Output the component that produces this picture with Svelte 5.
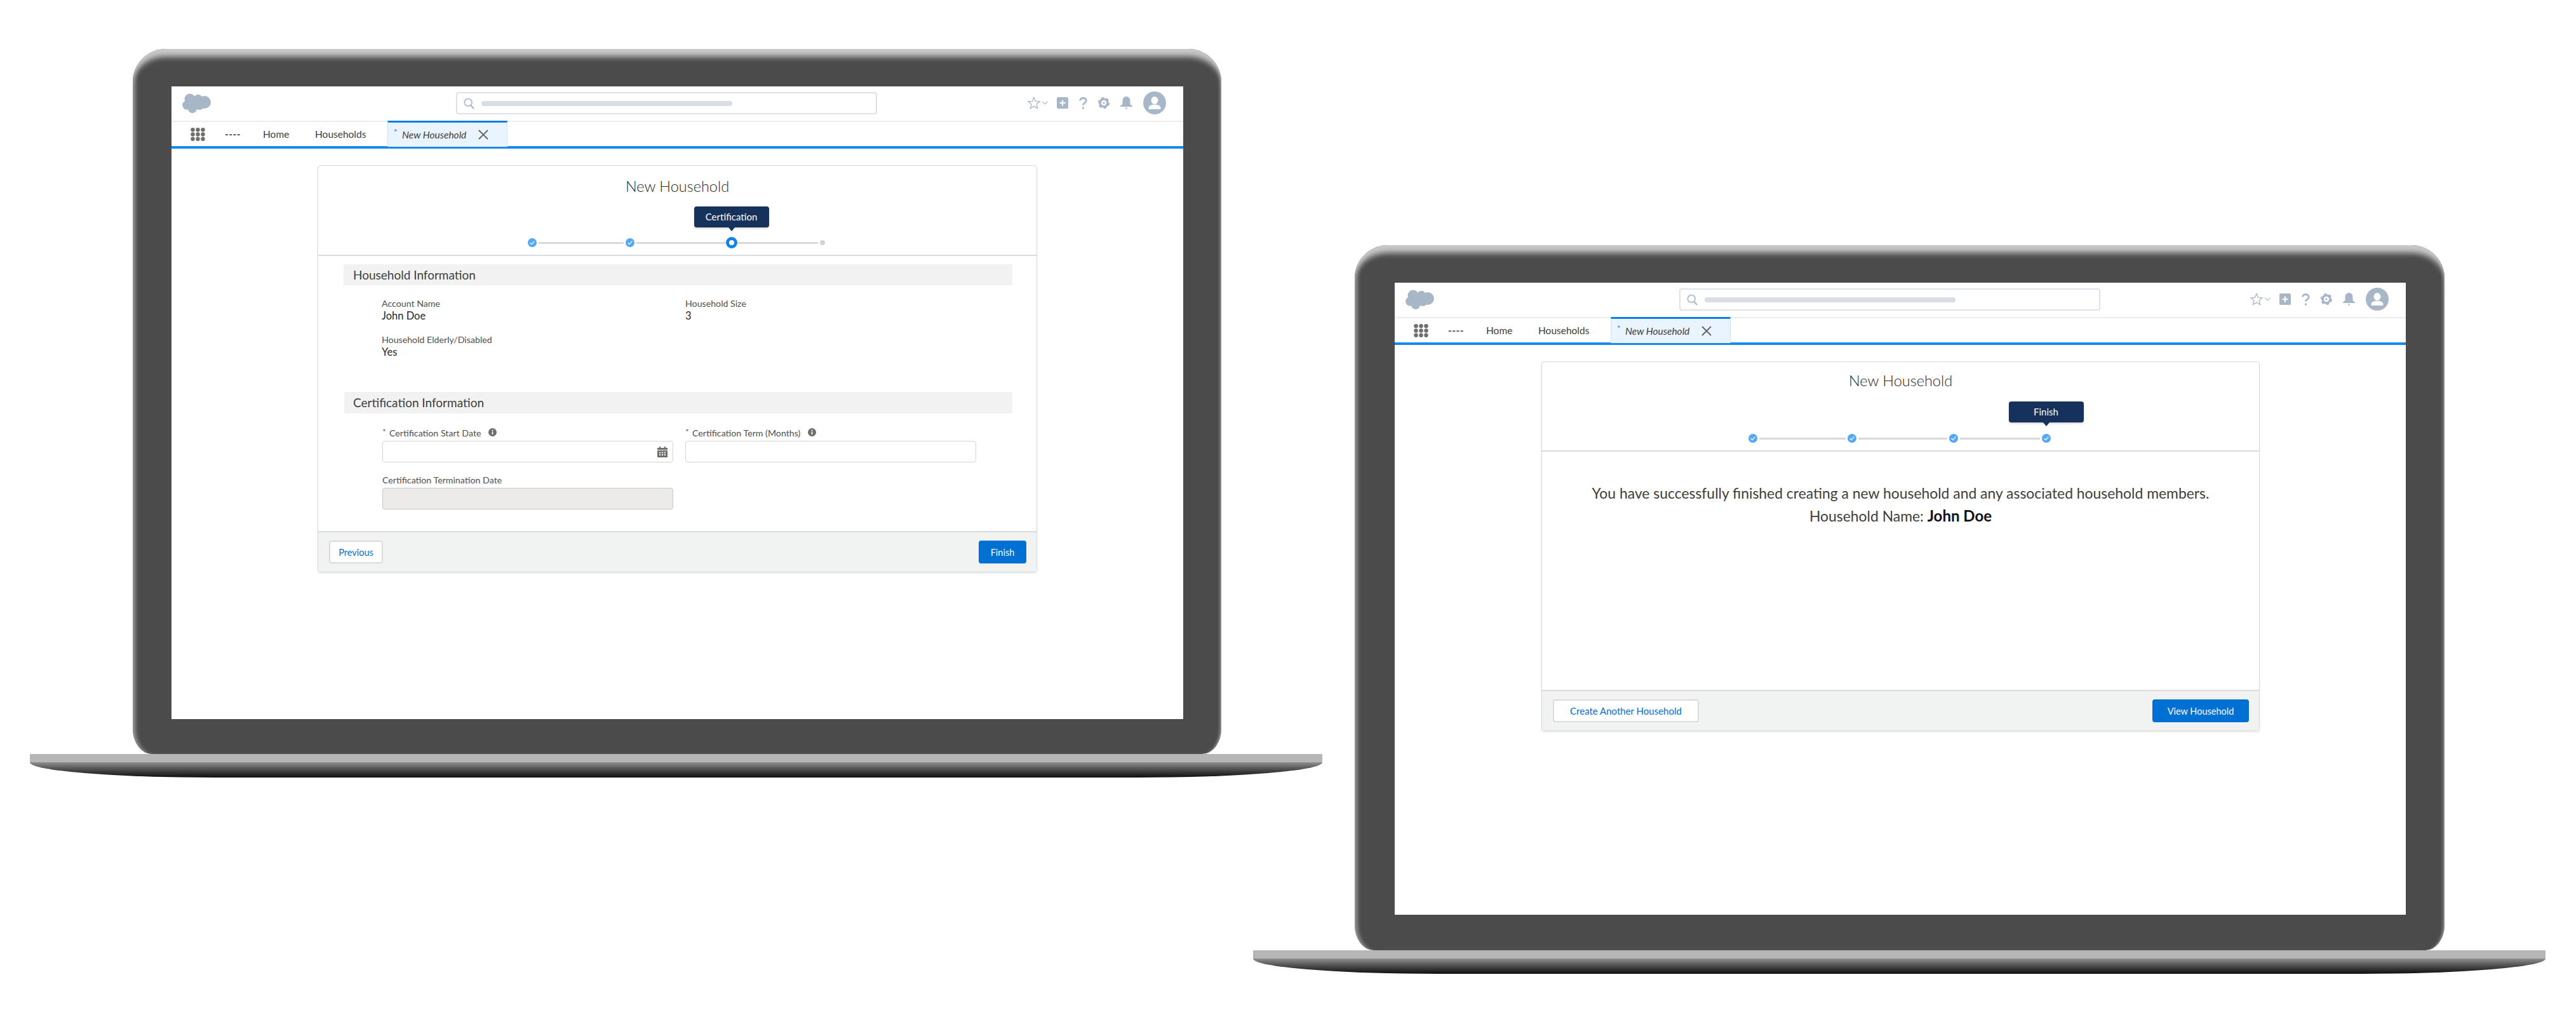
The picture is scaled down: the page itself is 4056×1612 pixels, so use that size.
<script>
  const certSteps = [
    { state: 'done', line: 134 },
    { state: 'done', line: 140 },
    { state: 'current', line: 126, tip: 'Certification' },
    { state: 'todo' }
  ];
  const finishSteps = [
    { state: 'done', line: 136 },
    { state: 'done', line: 140 },
    { state: 'done', line: 126 },
    { state: 'done', tip: 'Finish' }
  ];
</script>

{#snippet info()}
  <svg class="info" viewBox="0 0 12 12" width="13" height="13">
    <circle cx="6" cy="6" r="6" fill="#706e6b" />
    <rect x="5.2" y="5.2" width="1.6" height="4" fill="#fff" />
    <circle cx="6" cy="3.4" r="1" fill="#fff" />
  </svg>
{/snippet}

{#snippet chrome()}
  <header class="topbar">
    <svg class="logo" viewBox="0 0 45 31" width="45" height="31" fill="#a8b7c7">
      <circle cx="12" cy="9" r="8.5" />
      <circle cx="25" cy="8.5" r="6.7" />
      <circle cx="35" cy="14" r="10" />
      <circle cx="7.5" cy="18.5" r="7.3" />
      <circle cx="16" cy="24" r="7" />
      <circle cx="27" cy="18" r="8" />
      <circle cx="20" cy="15" r="10" />
    </svg>
    <div class="search">
      <svg viewBox="0 0 20 20" width="18" height="20" fill="none" stroke="#a8b7c7" stroke-width="1.8">
        <circle cx="8" cy="8" r="6.5" />
        <path d="M12.5 13 18 19" stroke-width="2.4" />
      </svg>
      <span class="placeholder"></span>
    </div>
    <div class="tools">
      <span class="fav">
        <svg viewBox="0 0 20 20" width="20" height="20" fill="none" stroke="#a8b7c7" stroke-width="1.3">
          <path d="M10 1.2 12.6 7.4 19 7.9 14.1 12.1 15.7 18.6 10 15.1 4.3 18.6 5.9 12.1 1 7.9 7.4 7.4Z" />
        </svg>
        <svg viewBox="0 0 9 6" width="9" height="6" fill="none" stroke="#a8b7c7" stroke-width="1.2">
          <path d="M.5.8 4.5 5 8.5.8" />
        </svg>
      </span>
      <svg viewBox="0 0 18 18" width="18" height="18">
        <rect width="18" height="18" rx="2" fill="#a8b7c7" />
        <path d="M9 4.5v9M4.5 9h9" stroke="#fff" stroke-width="2.2" />
      </svg>
      <svg viewBox="0 0 13 19" width="13" height="19" fill="none" stroke="#a8b7c7" stroke-width="2.8">
        <path d="M1.6 5.6C1.6 3 3.6 1.5 6.4 1.5s4.9 1.6 4.9 4c0 3.6-4.8 3.4-4.8 7.2" />
        <circle cx="6.5" cy="17" r="1.7" fill="#a8b7c7" stroke="none" />
      </svg>
      <svg viewBox="0 0 18 18" width="18" height="18">
        <circle cx="9" cy="9" r="6" fill="none" stroke="#a8b7c7" stroke-width="3.6" />
        <circle cx="9" cy="9" r="8" fill="none" stroke="#a8b7c7" stroke-width="2.4" stroke-dasharray="4.2 4.18" />
        <circle cx="9" cy="9" r="1.6" fill="#a8b7c7" />
      </svg>
      <svg viewBox="0 0 19 20" width="19" height="20" fill="#a8b7c7">
        <path d="M9.5 0C13 0 15.5 2.6 15.5 6.2V11c0 1.6 1.2 2.4 3.5 3.6V16H0v-1.4C2.3 13.4 3.5 12.6 3.5 11V6.2C3.5 2.6 6 0 9.5 0Z" />
        <path d="M7.2 17.5h4.6L9.5 20Z" />
      </svg>
      <svg viewBox="0 0 36 36" width="36" height="36">
        <circle cx="18" cy="18" r="18" fill="#a8b7c7" />
        <ellipse cx="18" cy="14" rx="5.5" ry="6" fill="#fff" />
        <path d="M8.5 26.5C8.5 22.5 12 20.8 18 20.8S27.5 22.5 27.5 26.5C27.5 27.5 26.8 28 26 28H10C9.2 28 8.5 27.5 8.5 26.5Z" fill="#fff" />
      </svg>
    </div>
  </header>
  <nav class="navbar">
    <svg class="launcher" viewBox="0 0 23 21" width="23" height="21" fill="#706e6b">
      {#each [3.3, 10.5, 17.7] as y}
        {#each [3.5, 11.5, 19.5] as x}
          <circle cx={x} cy={y} r="3.2" />
        {/each}
      {/each}
    </svg>
    <b class="app">----</b>
    <span class="home">Home</span>
    <span class="households">Households</span>
    <div class="tab">
      <span class="star">*</span>
      <em>New Household</em>
      <svg viewBox="0 0 16 16" width="16" height="16" stroke="#5f5f5c" stroke-width="1.8">
        <path d="M1 1 15 15M15 1 1 15" />
      </svg>
    </div>
  </nav>
{/snippet}

{#snippet stepper(steps)}
  <div class="stepper">
    {#each steps as step}
      <span class="step {step.state}">
        {#if step.tip}
          <span class="tip">{step.tip}</span>
        {/if}
        {#if step.state === 'done'}
          <svg viewBox="0 0 14 14" width="14" height="14">
            <circle cx="7" cy="7" r="7" fill="#54a8f5" />
            <path d="M3.6 7.2 6 9.6 10.4 4.6" fill="none" stroke="#fff" stroke-width="1.3" />
          </svg>
        {/if}
      </span>
      {#if step.line}
        <span class="line" style="width: {step.line}px"></span>
      {/if}
    {/each}
  </div>
{/snippet}

<div class="page">
  <section class="laptop first">
    <div class="bezel">
      <div class="screen">
        {@render chrome()}
        <main>
          <div class="card">
            <div class="card-head">
              <h1>New Household</h1>
              {@render stepper(certSteps)}
            </div>
            <div class="card-body form">
              <h2>Household Information</h2>
              <div class="fields">
                <div class="field">
                  <span class="label">Account Name</span>
                  <span class="value">John Doe</span>
                </div>
                <div class="field">
                  <span class="label">Household Size</span>
                  <span class="value">3</span>
                </div>
                <div class="field">
                  <span class="label">Household Elderly/Disabled</span>
                  <span class="value">Yes</span>
                </div>
              </div>
              <h2 class="next">Certification Information</h2>
              <div class="inputs">
                <div class="field">
                  <span class="label"><i>*</i>Certification Start Date {@render info()}</span>
                  <div class="input date">
                    <svg viewBox="0 0 16 18" width="16" height="18">
                      <path d="M0 3h3V1h2v2h6V1h2v2h3v3H0ZM0 7h16v11H0Z" fill="#706e6b" />
                      <path d="M3 9.5h2.2v2H3ZM6.9 9.5h2.2v2H6.9ZM10.8 9.5H13v2h-2.2ZM3 13h2.2v2H3ZM6.9 13h2.2v2H6.9ZM10.8 13H13v2h-2.2Z" fill="#fff" />
                    </svg>
                  </div>
                </div>
                <div class="field">
                  <span class="label"><i>*</i>Certification Term (Months) {@render info()}</span>
                  <div class="input"></div>
                </div>
                <div class="field">
                  <span class="label">Certification Termination Date</span>
                  <div class="input disabled"></div>
                </div>
              </div>
            </div>
            <div class="card-foot">
              <button class="neutral prev">Previous</button>
              <button class="brand finish">Finish</button>
            </div>
          </div>
        </main>
      </div>
    </div>
    <div class="base"></div>
  </section>

  <section class="laptop second">
    <div class="bezel">
      <div class="screen">
        {@render chrome()}
        <main>
          <div class="card">
            <div class="card-head">
              <h1>New Household</h1>
              {@render stepper(finishSteps)}
            </div>
            <div class="card-body done-msg">
              <p>You have successfully finished creating a new household and any associated household members.</p>
              <p>Household Name: <strong>John Doe</strong></p>
            </div>
            <div class="card-foot">
              <button class="neutral create">Create Another Household</button>
              <button class="brand view">View Household</button>
            </div>
          </div>
        </main>
      </div>
    </div>
    <div class="base"></div>
  </section>
</div>

<style>
  :global(body) {
    margin: 0;
    background: #fff;
  }

  .page {
    position: relative;
    width: 4056px;
    height: 1612px;
    background: #fff;
    overflow: hidden;
    font-family: Lato, "Open Sans", sans-serif;
    color: #3e3e3c;
  }

  .laptop {
    position: absolute;
    display: flex;
    flex-direction: column;
    align-items: center;
    width: 2035px;
  }

  .laptop.first {
    left: 47px;
    top: 77px;
  }

  .laptop.second {
    left: 1973px;
    top: 386px;
  }

  .bezel {
    box-sizing: border-box;
    width: 1714px;
    height: 1110px;
    margin-left: 3px;
    padding: 59px 60px 55px 61px;
    background: #4b4b4b;
    border-radius: 52px 52px 30px 30px / 52px 52px 40px 40px;
    box-shadow:
      inset 0 20px 10px -8px #c9c9c9,
      inset 9px 0 6px -5px #9c9c9c,
      inset -5px 0 4px -3px #9c9c9c;
  }

  .second .bezel {
    width: 1716px;
    margin-left: 1px;
    padding: 59px 61px 56px 63px;
  }

  .screen {
    display: flex;
    flex-direction: column;
    height: 100%;
    background: #fff;
  }

  .base {
    width: 2035px;
    height: 37px;
    flex: none;
    background: linear-gradient(#b6b6b6 0 13px, #8e8e8e 13px, #4a4a4a 25px, #0e0e0e 37px);
    border-radius: 0 0 293px 293px / 0 0 24px 24px;
  }

  .topbar {
    flex: none;
    box-sizing: border-box;
    display: grid;
    grid-template-columns: 431px 663px 1fr;
    align-items: center;
    height: 56px;
    padding: 0 27px 2px 17px;
    border-bottom: 2px solid #ececec;
  }

  .logo {
    display: block;
  }

  .search {
    box-sizing: border-box;
    display: flex;
    align-items: center;
    gap: 10px;
    height: 35px;
    margin-top: 1px;
    padding-left: 10px;
    border: 2px solid #dde1ea;
    border-radius: 4px;
  }

  .placeholder {
    width: 395px;
    height: 8px;
    border-radius: 4px;
    background: #d8dde6;
  }

  .tools {
    display: flex;
    justify-content: flex-end;
    align-items: center;
    gap: 17px;
  }

  .fav {
    display: flex;
    align-items: center;
    gap: 3px;
    margin-right: -3px;
  }

  .navbar {
    flex: none;
    box-sizing: border-box;
    display: flex;
    align-items: center;
    height: 42px;
    padding-left: 30px;
    border-bottom: 4px solid #1589ee;
    font-size: 15.5px;
  }

  .launcher {
    margin-right: 31px;
  }

  .app {
    width: 60px;
    font-weight: 700;
    letter-spacing: 0.5px;
  }

  .home {
    width: 82px;
  }

  .households {
    width: 114px;
  }

  .tab {
    box-sizing: border-box;
    display: flex;
    align-items: center;
    width: 189px;
    height: 41px;
    margin-top: -1px;
    padding-left: 9px;
    background: #e9f4fe;
    border-top: 3px solid #0d7fe0;
    border-left: 1px solid #cfe4f7;
    border-right: 1px solid #cfe4f7;
  }

  .star {
    width: 13px;
    margin-top: -8px;
    color: #1589ee;
    font-size: 13px;
  }

  .tab em {
    width: 120px;
  }

  main {
    flex: 1;
    padding: 26px 230px 0 230px;
  }

  .second main {
    padding: 26px 230px 0 231px;
  }

  .card {
    border: 1px solid #d8d8d8;
    border-radius: 4px;
    box-shadow: 0 2px 3px rgba(0, 0, 0, 0.08);
  }

  .card-head {
    box-sizing: border-box;
    display: flex;
    flex-direction: column;
    align-items: center;
    height: 142px;
    border-bottom: 2px solid #dcdcdc;
  }

  h1 {
    margin: 15px 0 0;
    height: 34px;
    font-size: 23.5px;
    line-height: 34px;
    font-weight: 300;
    color: #2b2826;
  }

  .stepper {
    display: flex;
    align-items: center;
    flex: none;
    height: 18px;
    margin-top: 63px;
    margin-left: -4px;
  }

  .second .stepper {
    margin-top: 65px;
  }

  .step {
    position: relative;
    display: flex;
  }

  .line {
    height: 3px;
    margin: 0 3px;
    background: #d9d9d9;
  }

  .step.current {
    box-sizing: border-box;
    width: 18px;
    height: 18px;
    margin: 0 -2px;
    border: 5px solid #0f84e8;
    border-radius: 50%;
  }

  .step.todo {
    width: 8px;
    height: 8px;
    border-radius: 50%;
    background: #d4d4d4;
  }

  .tip {
    position: absolute;
    left: 50%;
    bottom: 100%;
    transform: translateX(-50%);
    margin-bottom: 18px;
    width: 118px;
    height: 33px;
    border-radius: 4px;
    background: #16325c;
    color: #fff;
    font-size: 15px;
    line-height: 33px;
    text-align: center;
    box-shadow: 0 2px 3px rgba(0, 0, 0, 0.16);
  }

  .step.current .tip {
    margin-bottom: 20px;
  }

  .tip::after {
    content: "";
    position: absolute;
    left: 50%;
    top: 100%;
    margin-left: -5px;
    border: 5px solid transparent;
    border-bottom-width: 0;
    border-top: 6px solid #16325c;
  }

  .card-body {
    box-sizing: border-box;
  }

  .form {
    height: 433px;
    padding: 13px 38px 0 41px;
  }

  h2 {
    margin: 0;
    height: 33px;
    padding-left: 14px;
    background: #f2f2f2;
    font-size: 19px;
    line-height: 33px;
    font-weight: 400;
  }

  h2:first-child {
    margin-left: -1px;
    padding-left: 15px;
  }

  h2.next {
    height: 34px;
    margin-top: 52px;
    line-height: 34px;
  }

  .fields {
    display: grid;
    grid-template-columns: 478px 1fr;
    row-gap: 16px;
    padding: 18px 0 0 59px;
  }

  .inputs {
    display: grid;
    grid-template-columns: 458px 458px;
    gap: 17px 19px;
    padding: 20px 0 0 60px;
  }

  .field {
    display: flex;
    flex-direction: column;
  }

  .label {
    display: flex;
    align-items: center;
    height: 20px;
    font-size: 14.2px;
    color: #514f4d;
    white-space: pre;
  }

  .label i {
    width: 11px;
    color: #706e6b;
    font-style: normal;
    margin-top: -3px;
  }

  .info {
    margin-left: 8px;
    margin-top: -2px;
  }

  .value {
    height: 21px;
    font-size: 16.5px;
    line-height: 21px;
    color: #2b2826;
  }

  .input {
    box-sizing: border-box;
    display: flex;
    justify-content: flex-end;
    align-items: center;
    height: 34px;
    margin-top: 3px;
    padding-right: 8px;
    border: 1px solid #d4d4d4;
    border-radius: 4px;
    background: #fff;
  }

  .input.disabled {
    background: #ecebea;
    border-color: #c9c7c5;
  }

  .card-foot {
    box-sizing: border-box;
    display: flex;
    justify-content: space-between;
    align-items: center;
    height: 64px;
    padding: 0 16px 0 17px;
    background: #f1f2f2;
    border-top: 2px solid #dcdcdc;
    border-radius: 0 0 4px 4px;
  }

  button {
    box-sizing: border-box;
    height: 36px;
    border-radius: 4px;
    font-family: inherit;
    font-size: 14.5px;
    padding: 0;
  }

  .neutral {
    background: #fff;
    border: 2px solid #dddbda;
    color: #0070d2;
  }

  .brand {
    background: #0070d2;
    border: 0;
    color: #fff;
  }

  .prev {
    width: 85px;
  }

  .finish {
    width: 75px;
  }

  .create {
    width: 230px;
    font-size: 15px;
  }

  .view {
    width: 152px;
  }

  .second .card-head {
    height: 141px;
  }

  .second h1 {
    margin-top: 12px;
  }

  .done-msg {
    height: 375px;
    padding-top: 47px;
    text-align: center;
    font-size: 22.9px;
    line-height: 36px;
  }

  .done-msg p {
    margin: 0;
  }

  .done-msg strong {
    color: #111;
    font-size: 24px;
    font-weight: 700;
  }
</style>
